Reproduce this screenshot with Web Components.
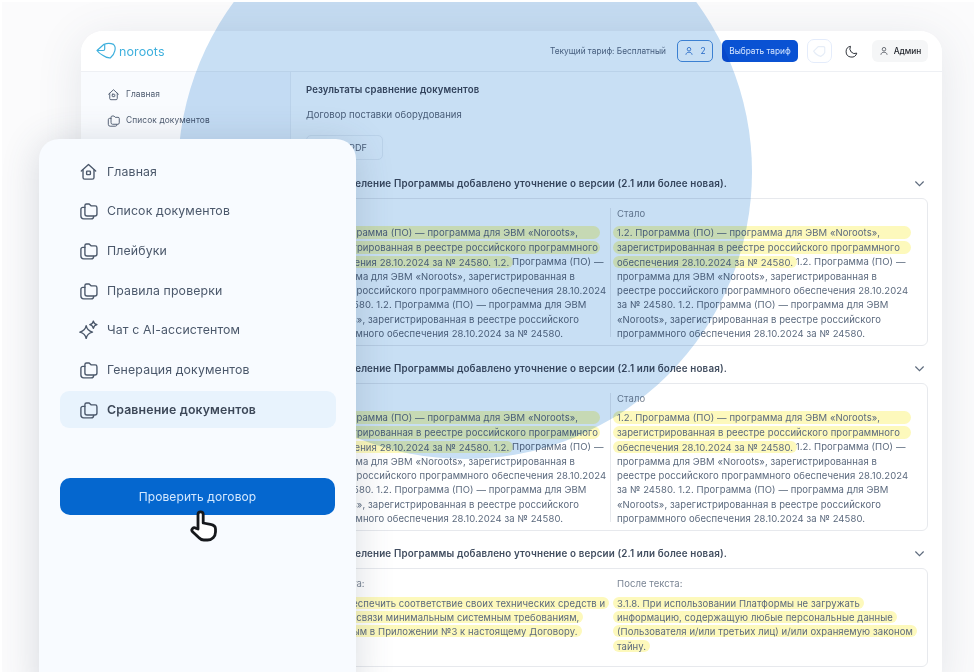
<!DOCTYPE html>
<html lang="ru"><head><meta charset="utf-8"><title>noroots</title>
<style>
html,body{margin:0;padding:0;background:#fff;font-family:Inter,"Noto Sans",sans-serif;width:974px;height:672px;overflow:hidden}
</style></head><body>
<desk-stage>
  <app-window>
    <app-header slot="h"></app-header>
    <small-nav slot="side">
      <small-link icon="home">Главная</small-link>
      <small-link icon="folder">Список документов</small-link>
    </small-nav>
    <result-head></result-head>
    <diff-section>
      <span slot="title">1.1. Определение Программы добавлено уточнение о версии (2.1 или более новая).</span>
      <diff-col label="Было" first>
        <diff-line><hl-mark full>1.2. Программа (ПО) — программа для ЭВМ «Noroots»,</hl-mark></diff-line>
        <diff-line><hl-mark full>зарегистрированная в реестре российского программного</hl-mark></diff-line>
        <diff-line><hl-mark>обеспечения 28.10.2024 за № 24580. 1.2.</hl-mark> Программа (ПО) —</diff-line>
        <diff-line>программа для ЭВМ «Noroots», зарегистрированная в</diff-line>
        <diff-line>реестре российского программного обеспечения 28.10.2024</diff-line>
        <diff-line>за № 24580. 1.2. Программа (ПО) — программа для ЭВМ</diff-line>
        <diff-line>«Noroots», зарегистрированная в реестре российского</diff-line>
        <diff-line>программного обеспечения 28.10.2024 за № 24580.</diff-line>
      </diff-col>
      <diff-col label="Стало" divided>
        <diff-line><hl-mark full>1.2. Программа (ПО) — программа для ЭВМ «Noroots»,</hl-mark></diff-line>
        <diff-line><hl-mark full>зарегистрированная в реестре российского программного</hl-mark></diff-line>
        <diff-line><hl-mark>обеспечения 28.10.2024 за № 24580.</hl-mark> 1.2. Программа (ПО) —</diff-line>
        <diff-line>программа для ЭВМ «Noroots», зарегистрированная в</diff-line>
        <diff-line>реестре российского программного обеспечения 28.10.2024</diff-line>
        <diff-line>за № 24580. 1.2. Программа (ПО) — программа для ЭВМ</diff-line>
        <diff-line>«Noroots», зарегистрированная в реестре российского</diff-line>
        <diff-line>программного обеспечения 28.10.2024 за № 24580.</diff-line>
      </diff-col>
    </diff-section>
    <diff-section>
      <span slot="title">1.1. Определение Программы добавлено уточнение о версии (2.1 или более новая).</span>
      <diff-col label="Было" first>
        <diff-line><hl-mark full>1.2. Программа (ПО) — программа для ЭВМ «Noroots»,</hl-mark></diff-line>
        <diff-line><hl-mark full>зарегистрированная в реестре российского программного</hl-mark></diff-line>
        <diff-line><hl-mark>обеспечения 28.10.2024 за № 24580. 1.2.</hl-mark> Программа (ПО) —</diff-line>
        <diff-line>программа для ЭВМ «Noroots», зарегистрированная в</diff-line>
        <diff-line>реестре российского программного обеспечения 28.10.2024</diff-line>
        <diff-line>за № 24580. 1.2. Программа (ПО) — программа для ЭВМ</diff-line>
        <diff-line>«Noroots», зарегистрированная в реестре российского</diff-line>
        <diff-line>программного обеспечения 28.10.2024 за № 24580.</diff-line>
      </diff-col>
      <diff-col label="Стало" divided>
        <diff-line><hl-mark full>1.2. Программа (ПО) — программа для ЭВМ «Noroots»,</hl-mark></diff-line>
        <diff-line><hl-mark full>зарегистрированная в реестре российского программного</hl-mark></diff-line>
        <diff-line><hl-mark>обеспечения 28.10.2024 за № 24580.</hl-mark> 1.2. Программа (ПО) —</diff-line>
        <diff-line>программа для ЭВМ «Noroots», зарегистрированная в</diff-line>
        <diff-line>реестре российского программного обеспечения 28.10.2024</diff-line>
        <diff-line>за № 24580. 1.2. Программа (ПО) — программа для ЭВМ</diff-line>
        <diff-line>«Noroots», зарегистрированная в реестре российского</diff-line>
        <diff-line>программного обеспечения 28.10.2024 за № 24580.</diff-line>
      </diff-col>
    </diff-section>
    <diff-section short>
      <span slot="title">1.1. Определение Программы добавлено уточнение о версии (2.1 или более новая).</span>
      <diff-col label="До текста:" first>
        <diff-line><hl-mark>3.1.7. Обеспечить соответствие своих технических средств и</hl-mark></diff-line>
        <diff-line><hl-mark>каналов связи минимальным системным требованиям,</hl-mark></diff-line>
        <diff-line><hl-mark>указанным в Приложении №3 к настоящему Договору.</hl-mark></diff-line>
      </diff-col>
      <diff-col label="После текста:">
        <diff-line><hl-mark>3.1.8. При использовании Платформы не загружать</hl-mark></diff-line>
        <diff-line><hl-mark>информацию, содержащую любые персональные данные</hl-mark></diff-line>
        <diff-line><hl-mark>(Пользователя и/или третьих лиц) и/или охраняемую законом</hl-mark></diff-line>
        <diff-line><hl-mark>тайну.</hl-mark></diff-line>
      </diff-col>
    </diff-section>
  </app-window>
  <blue-disc></blue-disc>
  <nav-panel>
    <nav-item icon="home">Главная</nav-item>
    <nav-item icon="folder">Список документов</nav-item>
    <nav-item icon="folder">Плейбуки</nav-item>
    <nav-item icon="folder">Правила проверки</nav-item>
    <nav-item icon="spark">Чат с AI-ассистентом</nav-item>
    <nav-item icon="folder">Генерация документов</nav-item>
    <nav-item icon="folder" active>Сравнение документов</nav-item>
    <check-button slot="action">Проверить договор</check-button>
  </nav-panel>
  <hand-cursor></hand-cursor>
</desk-stage>
<script>
const ICONS={
 home:'<path d="M2.2 8.6 9 2.4l6.8 6.2"/><path d="M3.8 7.4v7.2a1.6 1.6 0 0 0 1.6 1.6h7.2a1.6 1.6 0 0 0 1.6-1.6V7.4"/><rect x="7.2" y="8.6" width="3.6" height="3.4" rx=".7"/>',
 folder:'<path d="M5.6 4.3A1.5 1.5 0 0 1 7.1 2.8h2.5l1.8 1.8h3.9a1.7 1.7 0 0 1 1.7 1.7v5.9a2 2 0 0 1-2 2H7.6a2 2 0 0 1-2-2z"/><path d="M5.6 6H3.7A1.9 1.9 0 0 0 1.8 7.9v6.4a2.6 2.6 0 0 0 2.6 2.6h7.2a2.3 2.3 0 0 0 2.3-2.3"/>',
 spark:'<path d="M6.800 5.400c.6 3.200 2.700 5.300 6 6.100-3.300.8-5.400 2.900-6 6.100-.6-3.200-2.700-5.300-6-6.100 3.300-.8 5.400-2.900 6-6.100z"/><path d="M13.600 1c.4 1.800 1.500 2.900 3.400 3.400-1.900.5-3 1.600-3.400 3.400-.4-1.800-1.500-2.900-3.400-3.400 1.900-.5 3-1.600 3.400-3.400z"/>',
 user:'<circle cx="9" cy="5.800" r="3.200"/><path d="M3.400 15.800c.4-3 2.500-4.600 5.600-4.600s5.200 1.600 5.600 4.600"/>',
};
function def(name,html){customElements.define(name,class extends HTMLElement{
  constructor(){super();const r=this.attachShadow({mode:'open'});r.innerHTML=html;}
  connectedCallback(){
    if(this._done)return;this._done=1;
    const s=this.shadowRoot.querySelector('[data-icon]');
    if(s)s.innerHTML=ICONS[this.getAttribute('icon')]||'';
    const l=this.shadowRoot.querySelector('[data-label]');
    if(l)l.textContent=this.getAttribute('label')||'';
  }
});}
def('desk-stage',`<style>:host{display:block;position:relative;width:972px;height:670px;margin:2px 0 0 2px;overflow:hidden;background:#fbfbfc}</style><slot></slot>`);
def('blue-disc',`<style>:host{display:block;position:absolute;left:176px;top:-117px;width:574px;height:574px;border-radius:50%;background:#c8dff4;mix-blend-mode:multiply}</style>`);
def('app-window',`<style>
:host{display:block;position:absolute;left:79px;top:29px;width:861px;height:660px;background:#fff;border-radius:22px;box-shadow:0 8px 46px rgba(70,85,110,.13);overflow:hidden;filter:blur(.4px)}
.body{display:flex;height:620px}
aside{width:209px;flex:none;background:#f9fbfe;border-right:1px solid #eef1f5}
main{flex:1;padding:10px 14px 0 15px;min-width:0}
</style><slot name="h"></slot><div class="body"><aside><slot name="side"></slot></aside><main><slot></slot></main></div>`);
def('app-header',`<style>
:host{display:flex;align-items:center;height:40px;border-bottom:1px solid #eef0f4;padding:0 14px 0 14px;background:#fff;font-size:8.300px;color:#5a6c84}
.logo{display:flex;align-items:center;gap:1px;color:#3fb0dd;font-size:12.500px;letter-spacing:.1px;margin-right:auto}
.logo svg{width:23px;height:21px;fill:none;stroke:#3fb0dd;stroke-width:1.200;stroke-linejoin:round}
.tar{margin-right:11px}
.btn{display:flex;align-items:center;justify-content:center;box-sizing:border-box;height:22px;border-radius:5px}
.us{width:36px;border:1px solid #4b92dc;color:#2f78d0;gap:6px;margin-right:9px}
.us svg{width:10px;height:10px;fill:none;stroke:#2f78d0;stroke-width:1.500}
.pick{width:76px;background:#0a52d3;color:#d6e6ff;margin-right:9px}
.tag{width:25px;height:24px;border:1px solid #e4ecfb;border-radius:7px;margin-right:8px}
.tag svg{width:15px;height:15px;fill:none;stroke:#e6edf7;stroke-width:1.400}
.moon{width:22px;margin-right:10px}
.moon svg{width:13px;height:13px;fill:none;stroke:#2b2f36;stroke-width:1.200}
.adm{width:56px;background:#f5f6f7;border-radius:6px;color:#23272e;gap:5px;font-weight:500}
.adm svg{width:10px;height:10px;fill:none;stroke:#3d434c;stroke-width:1.300}
</style>
<div class="logo"><svg viewBox="0 0 23 21"><path d="M2 9.500 9 3.200c3-1 7-1 9.500.2 1.600 1.500 2 4 1.300 6.400-.6 2.800-2 5-4.300 7-2.700.3-5.300-.6-7.800-2.500C5 12.800 3.300 11.500 2 9.500z"/><path d="M2 9.500h6.200c1 0 1.500-.6 1.500-1.500V3"/></svg>noroots</div>
<span class="tar">Текущий тариф: Бесплатный</span>
<div class="btn us"><svg viewBox="0 0 18 18">${ICONS.user}</svg>2</div>
<div class="btn pick">Выбрать тариф</div>
<div class="btn tag"><svg viewBox="0 0 18 18"><path d="M2 8.500 7.500 3.200h6.300a1.500 1.500 0 0 1 1.500 1.500v5.500c-.9 2.300-2.500 3.800-4.800 4.600C7 14 4 11.800 2 8.500z"/></svg></div>
<div class="btn moon"><svg viewBox="0 0 16 16"><path d="M6.800 1.600A6.700 6.700 0 1 0 14.500 10 6 6 0 0 1 6.800 1.600z"/></svg></div>
<div class="btn adm"><svg viewBox="0 0 18 18">${ICONS.user}</svg>Админ</div>`);
def('small-nav',`<style>:host{display:block;padding:9px 0 0 26px}</style><slot></slot>`);
def('small-link',`<style>
:host{display:flex;align-items:center;gap:6px;height:26px;font-size:8.400px;color:#4f5c70;letter-spacing:.1px}
svg{width:13px;height:13px;fill:none;stroke:#4f5c70;stroke-width:1.300;stroke-linejoin:round;stroke-linecap:round}
</style><svg viewBox="0 0 18 18" data-icon></svg><slot></slot>`);
def('result-head',`<style>
:host{display:block;color:#5c6a7e;font-size:9.500px}
.t{height:16px;line-height:16px;font-weight:600;color:#3f4c60;font-size:9.600px;letter-spacing:.1px}
.s{height:16px;line-height:16px;margin-top:9px;letter-spacing:.05px}
.b{box-sizing:border-box;display:flex;align-items:center;justify-content:flex-end;padding-right:15px;width:77px;height:25px;margin:12px 0 15px;border:1px solid #edf0f4;border-radius:5px;font-size:9.200px}
</style><div class="t">Результаты сравнение документов</div><div class="s">Договор поставки оборудования</div><div class="b">Скачать PDF</div>`);
def('diff-section',`<style>
:host{display:block;margin-bottom:14px}
.h{display:flex;align-items:center;justify-content:space-between;height:16px;margin-bottom:7px;font-size:9.800px;font-weight:600;color:#424e60;letter-spacing:.15px;padding-right:3px}
.h svg{width:11px;height:11px;fill:none;stroke:#5f6c7e;stroke-width:1.300}
.c{box-sizing:border-box;display:grid;grid-template-columns:295px 1fr;height:148px;border:1px solid #e7e9ed;border-radius:6px;padding:8px 8px 5px}
:host([short]) .c{height:99px}
</style><div class="h"><slot name="title"></slot><svg viewBox="0 0 12 12"><path d="M1.500 3.800 6 8.300l4.500-4.500"/></svg></div><div class="c"><slot></slot></div>`);
def('diff-col',`<style>
:host{display:block;box-sizing:border-box;padding-left:7px;font-size:9.500px;color:#5c6a7e;line-height:14.300px;letter-spacing:.08px;--hl-w:298px}
:host([first]){padding-left:0;--hl-w:289px}
:host([divided]){background:linear-gradient(#e7e9ed,#e7e9ed) 0 1px/1px calc(100% - 5px) no-repeat}
.l{height:14.300px;margin-bottom:5px;color:#7a8594}
</style><div class="l" data-label></div><slot></slot>`);
def('diff-line',`<style>:host{display:block;height:14.300px;white-space:nowrap}</style><slot></slot>`);
def('hl-mark',`<style>
:host{background:#fdf9bc;border-radius:6.500px;padding:.5px 4px;margin:0 -4px}
:host([full]){display:block;width:var(--hl-w);margin:.6px 0 0 -4px;padding:0 0 0 4px;box-sizing:border-box;height:13px;line-height:13px}
</style><slot></slot>`);
def('nav-panel',`<style>
:host{display:block;position:absolute;left:37px;top:137px;width:317px;height:560px;box-sizing:border-box;padding:13.500px 20px 0 21px;background:#f8fbff;border-radius:20px;box-shadow:0 4px 38px rgba(60,75,100,.2);filter:blur(.3px)}
.list{display:flex;flex-direction:column;gap:2.700px;margin-bottom:50.500px}
</style><div class="list"><slot></slot></div><slot name="action"></slot>`);
def('nav-item',`<style>
:host{display:flex;align-items:center;gap:9px;height:37px;padding-left:19px;border-radius:9px;font-size:12.300px;color:#4b586b;letter-spacing:.15px}
:host([active]){background:#e8f3fd;font-weight:600;color:#3d4858}
svg{width:19px;height:19px;flex:none;fill:none;stroke:#4b586b;stroke-width:1.300;stroke-linejoin:round;stroke-linecap:round}
</style><svg viewBox="0 0 18 18" data-icon></svg><slot></slot>`);
def('check-button',`<style>
:host{display:flex;align-items:center;justify-content:center;width:275px;height:37px;border-radius:10px;background:#0567cf;color:#d3e8ff;font-size:12px;letter-spacing:.1px}
</style><slot></slot>`);
def('hand-cursor',`<style>
:host{display:block;position:absolute;left:186px;top:506px;width:32px;height:34px}
svg{width:32px;height:34px;fill:#fff;stroke:#16181c;stroke-width:2.800;stroke-linejoin:round;stroke-linecap:round}
</style><svg viewBox="0 0 32 34"><path d="M10 21V6.500a2.600 2.600 0 0 1 5.200 0V15l7.300 1.400c2.800.5 5 1.500 5 4.600v3a8 8 0 0 1-8 8h-3.500a6.500 6.500 0 0 1-5-2.200L4.300 23.500a2.400 2.400 0 0 1 3.400-3.300z"/></svg>`);
</script>
</body></html>
